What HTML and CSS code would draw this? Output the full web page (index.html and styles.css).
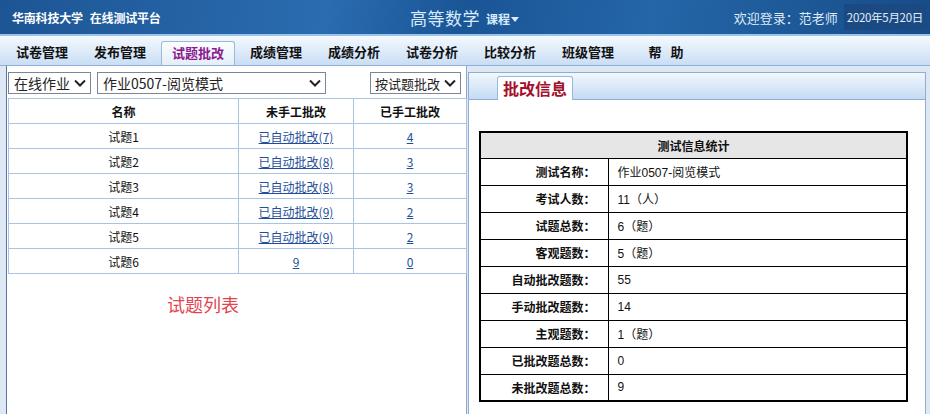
FILE: index.html
```html
<!DOCTYPE html>
<html lang="zh-CN">
<head>
    <meta charset="UTF-8">
    <meta name="viewport" content="width=device-width, initial-scale=1.0">
    <title>在线测试平台 - 试题批改</title>
    <link rel="stylesheet" href="styles.css">
</head>
<body>
    <header class="topbar">
        <div class="site-title">华南科技大学<span class="gap"></span>在线测试平台</div>
        <div class="course">
            <span class="course-name">高等数学</span>
            <span class="course-switch">课程<svg class="caret" viewBox="0 0 10 6"><path d="M0 0h10L5 6z" fill="currentColor"/></svg></span>
        </div>
        <div class="user-info">
            <span class="welcome">欢迎登录：范老师</span>
            <span class="today">2020年5月20日</span>
        </div>
    </header>

    <nav class="menu">
        <a class="menu-item">试卷管理</a>
        <a class="menu-item">发布管理</a>
        <a class="menu-item active">试题批改</a>
        <a class="menu-item">成绩管理</a>
        <a class="menu-item">成绩分析</a>
        <a class="menu-item">试卷分析</a>
        <a class="menu-item">比较分析</a>
        <a class="menu-item">班级管理</a>
        <a class="menu-item">帮&nbsp;&nbsp; 助</a>
    </nav>

    <main class="workspace">
        <section class="list-panel">
            <div class="filters">
                <div class="dropdown dd-type">
                    <span>在线作业</span>
                    <svg class="chevron" viewBox="0 0 12 8"><path d="M1 1.5l5 5 5-5" fill="none" stroke="currentColor" stroke-width="2"/></svg>
                </div>
                <div class="dropdown dd-test">
                    <span>作业0507-阅览模式</span>
                    <svg class="chevron" viewBox="0 0 12 8"><path d="M1 1.5l5 5 5-5" fill="none" stroke="currentColor" stroke-width="2"/></svg>
                </div>
                <div class="dropdown dd-mode">
                    <span>按试题批改</span>
                    <svg class="chevron" viewBox="0 0 12 8"><path d="M1 1.5l5 5 5-5" fill="none" stroke="currentColor" stroke-width="2"/></svg>
                </div>
            </div>

            <table class="question-table">
                <thead>
                    <tr>
                        <th class="col-name">名称</th>
                        <th class="col-todo">未手工批改</th>
                        <th>已手工批改</th>
                    </tr>
                </thead>
                <tbody>
                    <tr><td>试题1</td><td><a href="#">已自动批改(7)</a></td><td><a href="#">4</a></td></tr>
                    <tr><td>试题2</td><td><a href="#">已自动批改(8)</a></td><td><a href="#">3</a></td></tr>
                    <tr><td>试题3</td><td><a href="#">已自动批改(8)</a></td><td><a href="#">3</a></td></tr>
                    <tr><td>试题4</td><td><a href="#">已自动批改(9)</a></td><td><a href="#">2</a></td></tr>
                    <tr><td>试题5</td><td><a href="#">已自动批改(9)</a></td><td><a href="#">2</a></td></tr>
                    <tr><td>试题6</td><td><a href="#">9</a></td><td><a href="#">0</a></td></tr>
                </tbody>
            </table>

            <p class="list-caption">试题列表</p>
        </section>

        <section class="info-panel">
            <div class="info-tabs">
                <span class="info-tab">批改信息</span>
            </div>
            <div class="info-body">
                <table class="stat-table">
                    <thead>
                        <tr><th colspan="2">测试信息统计</th></tr>
                    </thead>
                    <tbody>
                        <tr><th>测试名称：</th><td>作业0507-阅览模式</td></tr>
                        <tr><th>考试人数：</th><td>11（人）</td></tr>
                        <tr><th>试题总数：</th><td>6（题）</td></tr>
                        <tr><th>客观题数：</th><td>5（题）</td></tr>
                        <tr><th>自动批改题数：</th><td>55</td></tr>
                        <tr><th>手动批改题数：</th><td>14</td></tr>
                        <tr><th>主观题数：</th><td>1（题）</td></tr>
                        <tr><th>已批改题总数：</th><td>0</td></tr>
                        <tr><th>未批改题总数：</th><td>9</td></tr>
                    </tbody>
                </table>
            </div>
        </section>
    </main>
</body>
</html>
```

FILE: styles.css
```css
* {
    margin: 0;
    padding: 0;
    box-sizing: border-box;
}

body {
    width: 930px;
    height: 414px;
    overflow: hidden;
    font-family: "Noto Sans CJK SC", "Liberation Sans", sans-serif;
    font-size: 12px;
    color: #111;
    background-color: #dde8f4;
}

/* top bar */
.topbar {
    height: 36px;
    display: flex;
    align-items: center;
    color: #fff;
    background: linear-gradient(100deg, #1d5594 0%, #2a6cb0 35%, #1a5596 50%, #2466a8 70%, #174c88 100%);
    border-bottom: 2px solid #9cc3ea;
}

.site-title {
    width: 410px;
    padding-left: 12px;
    font-size: 12px;
    font-weight: bold;
    letter-spacing: -0.2px;
}

.site-title .gap {
    display: inline-block;
    width: 7px;
}

.course {
    display: flex;
    align-items: center;
    color: #d8ecff;
}

.course-name {
    font-size: 17px;
    letter-spacing: 0.5px;
}

.course-switch {
    margin-left: 6px;
    margin-top: 3px;
    font-size: 12px;
    font-weight: bold;
    display: flex;
    align-items: center;
}

.caret {
    width: 8px;
    height: 5px;
    margin-left: 1px;
    margin-top: 2px;
}

.user-info {
    margin-left: auto;
    display: flex;
    align-items: center;
    height: 100%;
}

.welcome {
    font-size: 13px;
    color: #dfeaf6;
    margin-right: 6px;
}

.today {
    height: 26px;
    line-height: 26px;
    padding: 0 3px;
    margin-right: 4px;
    font-size: 11.5px;
    letter-spacing: -0.3px;
    color: #e3eefa;
    background: #1b4a82;
}

/* menu */
.menu {
    height: 30px;
    display: flex;
    align-items: flex-end;
    gap: 4px;
    padding-left: 5px;
    background: linear-gradient(#f4f9fe, #c9def5);
    border-bottom: 1px solid #8fb0d6;
}

.menu-item {
    width: 74px;
    height: 24px;
    line-height: 22px;
    text-align: center;
    font-size: 13px;
    font-weight: bold;
    color: #111;
    cursor: pointer;
}

.menu-item.active {
    color: #8a1a8e;
    background: linear-gradient(#fcfdff, #e4eef9);
    border: 1px solid #9db9da;
    border-bottom: none;
    border-radius: 3px 3px 0 0;
}

/* workspace */
.workspace {
    height: 348px;
    display: flex;
    padding-left: 6px;
}

.list-panel {
    width: 461px;
    background: #fff;
    border-left: 1px solid #56789f;
    border-right: 1px solid #8aa9cc;
    padding: 6px 0 0 1px;
}

.filters {
    display: flex;
    gap: 6px;
    height: 22px;
}

.dropdown {
    height: 22px;
    display: flex;
    align-items: center;
    justify-content: space-between;
    padding: 0 4px 0 5px;
    border: 1px solid #7a8797;
    font-size: 14px;
    color: #222;
    background: #fff;
    white-space: nowrap;
}

.dd-type { width: 83px; }
.dd-test { width: 229px; }
.dd-mode { width: 91px; margin-left: 38px; font-size: 13px; padding-left: 4px; }

.chevron {
    width: 12px;
    height: 8px;
    flex-shrink: 0;
    color: #222;
}

.question-table {
    margin-top: 4px;
    width: 459px;
    border-collapse: collapse;
    border: 1px solid #a9c3e3;
}

.question-table th,
.question-table td {
    height: 25px;
    text-align: center;
    border: 1px solid #a9c3e3;
    font-size: 12px;
    color: #111;
}

.question-table th {
    font-weight: bold;
}

.col-name { width: 230px; }
.col-todo { width: 115px; }

.question-table a {
    color: #1f4f9c;
    text-decoration: underline;
}

.list-caption {
    margin: 17px 0 0 159px;
    font-size: 18px;
    color: #e04550;
}

.info-panel {
    width: 458px;
    margin-left: 1px;
    margin-top: 6px;
    background: #fff;
    border: 1px solid #8faed1;
    border-bottom: none;
    display: flex;
    flex-direction: column;
}

.info-tabs {
    height: 27px;
    display: flex;
    align-items: flex-end;
    padding-left: 28px;
    background: linear-gradient(#f2f7fd, #c5dbf3);
    border-bottom: 1px solid #8faed1;
}

.info-tab {
    height: 24px;
    margin-bottom: -1px;
    padding: 0 5px;
    line-height: 22px;
    font-size: 16px;
    font-weight: bold;
    color: #a4102c;
    background: linear-gradient(#fbfdff, #ffffff);
    border: 1px solid #9bb8d9;
    border-bottom: none;
    border-radius: 3px 3px 0 0;
}

.info-body {
    flex: 1;
    padding: 31px 0 0 10px;
}

.stat-table {
    width: 429px;
    border-collapse: collapse;
    border: 2px solid #000;
}

.stat-table th,
.stat-table td {
    height: 27px;
    border: 1px solid #000;
    font-size: 12px;
}

.stat-table thead th {
    height: 26px;
    text-align: center;
    background: #e6e6e6;
}

.stat-table tbody th {
    width: 128px;
    text-align: right;
    padding-right: 12px;
}

.stat-table td {
    padding-left: 9px;
    font-family: "Liberation Sans", "Noto Sans CJK SC", sans-serif;
}
```
